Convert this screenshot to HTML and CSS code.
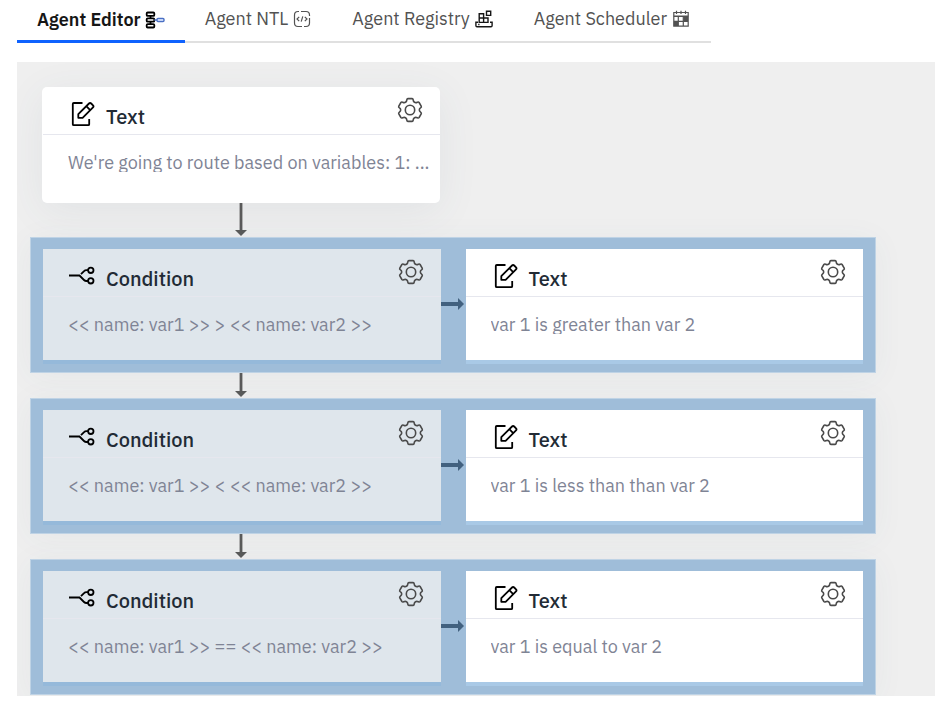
FILE: index.html
```html
<!DOCTYPE html>
<html lang="en">
<head>
<meta charset="utf-8">
<title>Agent Editor</title>
<link rel="stylesheet" href="styles.css">
</head>
<body>
<svg class="sprite" aria-hidden="true">
  <symbol id="i-edit" viewBox="-2 0 26 26">
    <path d="M11.5 2H2.8Q1.8 2 1.8 3V23.2Q1.8 24.2 2.8 24.2H17.2Q18.2 24.2 18.2 23.2V18" fill="none" stroke="currentColor" stroke-width="1.8"/>
    <path d="M18 2.5Q19.1 1.4 20.2 2.5L22 4.3Q23 5.4 22 6.4L11.6 16.8H7.3V13.2Z M15.3 5.2L19.2 9.1" fill="none" stroke="currentColor" stroke-width="1.8" stroke-linejoin="round"/>
  </symbol>
  <symbol id="i-cond" viewBox="0 0 26 26">
    <path d="M0 12.5H10.5L15 17Q16 18 17.5 18H19M12 11.2L14.8 8.3Q16 7.2 17.5 7.2H19" fill="none" stroke="currentColor" stroke-width="1.8"/>
    <circle cx="21.8" cy="7.3" r="2.7" fill="none" stroke="currentColor" stroke-width="1.8"/>
    <circle cx="21.8" cy="17.8" r="2.7" fill="none" stroke="currentColor" stroke-width="1.8"/>
  </symbol>
  <symbol id="i-gear" viewBox="0 0 26 26">
    <path d="M10.9 1.6H15.1Q16 1.6 16.1 2.6Q16.3 4.6 17.5 5.3Q18.7 6 20.4 5.2Q21.5 4.7 22.1 5.5L24.2 9.1Q24.7 10 23.8 10.7Q22.3 11.7 22.3 13Q22.3 14.3 23.8 15.3Q24.7 16 24.2 16.9L22.1 20.5Q21.5 21.3 20.4 20.8Q18.7 20 17.5 20.7Q16.3 21.4 16.1 23.4Q16 24.4 15.1 24.4H10.9Q10 24.4 9.9 23.4Q9.7 21.4 8.5 20.7Q7.3 20 5.6 20.8Q4.5 21.3 3.9 20.5L1.8 16.9Q1.3 16 2.2 15.3Q3.7 14.3 3.7 13Q3.7 11.7 2.2 10.7Q1.3 10 1.8 9.1L3.9 5.5Q4.5 4.7 5.6 5.2Q7.3 6 8.5 5.3Q9.7 4.6 9.9 2.6Q10 1.6 10.9 1.6Z" fill="none" stroke="currentColor" stroke-width="1.6" stroke-linejoin="round"/>
    <circle cx="13" cy="13" r="4.7" fill="none" stroke="currentColor" stroke-width="1.6"/>
  </symbol>
</svg>
<nav class="tabs">
  <a class="tab active" href="#editor">Agent Editor
    <svg class="tab-icon wide" viewBox="0 0 20 18" fill="none" stroke="currentColor" stroke-width="1.8"><rect x="1.7" y="1.5" width="7.6" height="3.4" rx="1"/><rect x="1.7" y="7.3" width="7.6" height="3.4" rx="1"/><rect x="1.7" y="13.1" width="7.6" height="3.4" rx="1"/><path d="M5.5 4.9V7.4M5.5 10.6V13.1"/><path class="blue" d="M9.3 9H12"/><rect class="blue" x="12" y="7.4" width="7" height="3.2" rx="1"/></svg></a>
  <a class="tab" href="#ntl">Agent NTL
    <svg class="tab-icon" viewBox="0 0 18 18" fill="none" stroke="currentColor" stroke-width="1.2"><path d="M6 1.5H5Q1.5 1.5 1.5 5V13Q1.5 16.5 5 16.5H9M8 1.5H13Q16.5 1.5 16.5 5V6M16.5 8V13Q16.5 16.5 13 16.5H11"/><path d="M6.2 6.8L4 9L6.2 11.2M11.8 6.8L14 9L11.8 11.2M9.8 6.3L8.2 11.7"/></svg></a>
  <a class="tab" href="#registry">Agent Registry
    <svg class="tab-icon dark" viewBox="0 0 18 18" fill="none" stroke="currentColor" stroke-width="1.4"><path d="M4.2 3.7H8.6V12.4H4.2ZM4.2 8H13V12.4H8.6M13 8V12.4M11.5 1.2H15.7V5.4H11.5Z"/><path d="M3 12.3H.9V15.5Q.9 16.7 2 16.7H16Q17.1 16.7 17.1 15.5V12.3H15M3.2 14.5H4.5"/></svg></a>
  <a class="tab" href="#scheduler">Agent Scheduler
    <svg class="tab-icon" viewBox="0 0 18 18"><path d="M1.8 2.5H16.2V16.2H1.8Z" fill="none" stroke="currentColor" stroke-width="1.2"/><path d="M1.8 5.5H16.2V7H1.8ZM1.8 11H6V16H1.8ZM11.5 6H16V11H11.5Z" fill="currentColor"/><path d="M4.5 .8V4M9 .8V4M13.5 .8V4M6.3 6V16M11.3 6V16M2 11.3H16" fill="none" stroke="currentColor" stroke-width="1.2"/></svg></a>
</nav>
<main class="canvas">
  <article class="card start">
    <header class="card-head"><svg class="kind"><use href="#i-edit"/></svg><h2>Text</h2><button class="gear" aria-label="Settings"><svg><use href="#i-gear"/></svg></button></header>
    <p>We're going to route based on variables: 1: ...</p>
  </article>
  <svg class="down first" viewBox="0 0 12 34"><path d="M6 0V28" stroke="currentColor" stroke-width="2.8"/><path d="M0 27H12L6 33Z" fill="currentColor"/></svg>
  <section class="branch">
    <article class="card condition">
      <header class="card-head"><svg class="kind"><use href="#i-cond"/></svg><h2>Condition</h2><button class="gear" aria-label="Settings"><svg><use href="#i-gear"/></svg></button></header>
      <p>&lt;&lt; name: var1 &gt;&gt; &gt; &lt;&lt; name: var2 &gt;&gt;</p>
    </article>
    <svg class="across" viewBox="0 0 25 12"><path d="M0 6H19" stroke="currentColor" stroke-width="4"/><path d="M17 0L23 6L17 12Z" fill="currentColor"/></svg>
    <article class="card">
      <header class="card-head"><svg class="kind"><use href="#i-edit"/></svg><h2>Text</h2><button class="gear" aria-label="Settings"><svg><use href="#i-gear"/></svg></button></header>
      <p>var 1 is greater than var 2</p>
    </article>
  </section>
  <svg class="down" viewBox="0 0 12 25"><path d="M6 0V20" stroke="currentColor" stroke-width="2.8"/><path d="M0 18H12L6 24Z" fill="currentColor"/></svg>
  <section class="branch">
    <article class="card condition">
      <header class="card-head"><svg class="kind"><use href="#i-cond"/></svg><h2>Condition</h2><button class="gear" aria-label="Settings"><svg><use href="#i-gear"/></svg></button></header>
      <p>&lt;&lt; name: var1 &gt;&gt; &lt; &lt;&lt; name: var2 &gt;&gt;</p>
    </article>
    <svg class="across" viewBox="0 0 25 12"><path d="M0 6H19" stroke="currentColor" stroke-width="4"/><path d="M17 0L23 6L17 12Z" fill="currentColor"/></svg>
    <article class="card">
      <header class="card-head"><svg class="kind"><use href="#i-edit"/></svg><h2>Text</h2><button class="gear" aria-label="Settings"><svg><use href="#i-gear"/></svg></button></header>
      <p>var 1 is less than than var 2</p>
    </article>
  </section>
  <svg class="down" viewBox="0 0 12 25"><path d="M6 0V20" stroke="currentColor" stroke-width="2.8"/><path d="M0 18H12L6 24Z" fill="currentColor"/></svg>
  <section class="branch">
    <article class="card condition">
      <header class="card-head"><svg class="kind"><use href="#i-cond"/></svg><h2>Condition</h2><button class="gear" aria-label="Settings"><svg><use href="#i-gear"/></svg></button></header>
      <p>&lt;&lt; name: var1 &gt;&gt; == &lt;&lt; name: var2 &gt;&gt;</p>
    </article>
    <svg class="across" viewBox="0 0 25 12"><path d="M0 6H19" stroke="currentColor" stroke-width="4"/><path d="M17 0L23 6L17 12Z" fill="currentColor"/></svg>
    <article class="card">
      <header class="card-head"><svg class="kind"><use href="#i-edit"/></svg><h2>Text</h2><button class="gear" aria-label="Settings"><svg><use href="#i-gear"/></svg></button></header>
      <p>var 1 is equal to var 2</p>
    </article>
  </section>
</main>
</body>
</html>
```

FILE: styles.css
```css
* { box-sizing: border-box; }
body {
  margin: 0 0 0 17px;
  background: #fff;
  font-family: "IBM Plex Sans", Roboto, "Liberation Sans", sans-serif;
  font-size: 18px;
  color: #222b35;
}
.sprite { display: none; }
.tabs { display: flex; height: 43px; margin-bottom: 19px; }
.tab {
  display: flex;
  gap: 5px;
  align-items: center;
  flex: 0 0 auto;
  padding: 0 21px 3px 20px;
  border-bottom: 2px solid #e0e0e0;
  color: #525252;
  line-height: 24px;
  text-decoration: none;
  white-space: nowrap;
}
.tab.active {
  gap: 4px;
  padding: 0 20px 0 20px;
  border-bottom: 3px solid #0f62fe;
  color: #161616;
  font-weight: 600;
}
.tab-icon { width: 18px; height: 18px; }
.tab-icon.wide { width: 20px; color: #000; }
.tab-icon.dark { color: #161616; }
.blue { stroke: #4a6fc4; stroke-width: 1.4; fill: #c5d5f5; }

.canvas {
  display: flex;
  flex-direction: column;
  align-items: flex-start;
  padding: 25px 13px 1px;
  background: #efefef;
}
.card {
  flex: 0 1 398px;
  min-width: 0;
  height: 111px;
  background: #fff;
  box-shadow: 0 4px 0 #a9c9e6;
}
.card.condition { background: #dfe6ec; box-shadow: 0 4px 0 #95b9da; }
.card.start {
  flex: none;
  width: 398px;
  max-width: 100%;
  height: 116px;
  margin-left: 12px;
  padding-left: 1px;
  border-radius: 5px;
  box-shadow: 0 8px 40px rgba(60, 90, 110, .08);
}
.card-head {
  display: flex;
  height: 48px;
  padding: 0 17px 0 26px;
  border-bottom: 1px solid #e6e7ee;
}
.kind { flex: none; width: 26px; height: 26px; margin-top: 14px; color: #000; }
h2 { margin: 17px auto 0 11px; font-size: 20px; font-weight: 500; line-height: 26px; }
.gear { width: 26px; height: 26px; margin-top: 10px; padding: 0; border: 0; background: none; color: #4a4a4a; }
.gear svg { display: block; width: 26px; height: 26px; }
p {
  margin: 19px 8px 0 25px;
  overflow: hidden;
  color: #7f8495;
  line-height: 18px;
  text-overflow: ellipsis;
  white-space: nowrap;
}
.down { width: 12px; height: 25px; margin-left: 205px; color: #5a5a5a; }
.down.first { height: 34px; }
.branch {
  display: flex;
  width: 846px;
  max-width: 100%;
  padding: 11px 12px 12px;
  border: 1px solid #bfd3e5;
  background: #9fbdd9;
  box-shadow: 0 4px 30px rgba(60, 90, 110, .05);
}
.across { flex: none; width: 25px; height: 12px; margin-top: 49px; color: #42617f; }
```
